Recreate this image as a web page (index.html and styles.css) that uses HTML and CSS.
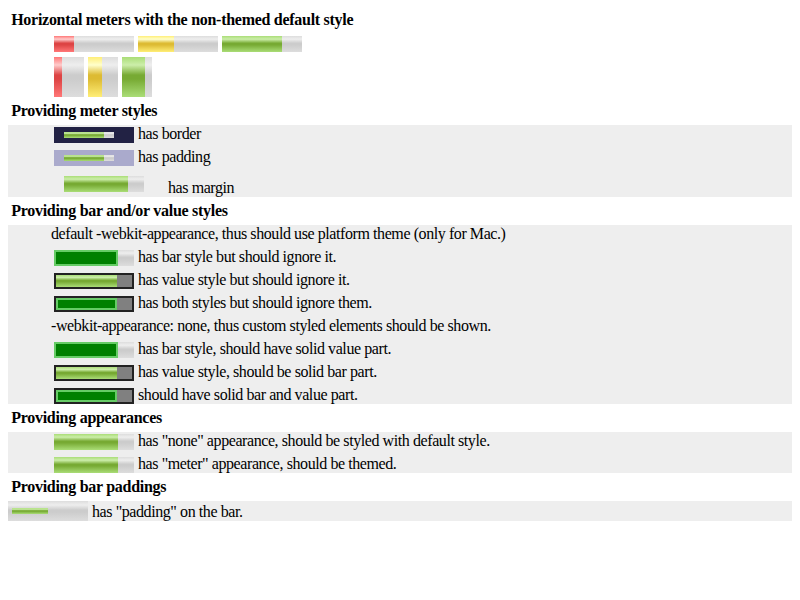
FILE: index.html
```html
<!DOCTYPE html>
<html>
<head>
<meta charset="utf-8">
<link rel="stylesheet" href="styles.css">
</head>
<body>
<h2>Horizontal meters with the non-themed default style</h2>
<div class="plain">
  <div class="row"><span class="meter"><span class="bar"><span class="val bad" style="width:25%"></span></span></span> <span class="meter"><span class="bar"><span class="val sub" style="width:45%"></span></span></span> <span class="meter"><span class="bar"><span class="val good" style="width:75%"></span></span></span></div>
  <div class="row"><span class="meter vert"><span class="bar"><span class="val bad" style="width:25%"></span></span></span> <span class="meter vert"><span class="bar"><span class="val sub" style="width:45%"></span></span></span> <span class="meter vert"><span class="bar"><span class="val good" style="width:75%"></span></span></span></div>
</div>

<h2>Providing meter styles</h2>
<div class="box">
  <div class="row"><span class="meter bordered"><span class="bar"><span class="val good" style="width:80%"></span></span></span> <span class="t">has border</span></div>
  <div class="row"><span class="meter padded"><span class="bar"><span class="val good" style="width:80%"></span></span></span> <span class="t">has padding</span></div>
  <div class="row"><span class="meter margined"><span class="bar"><span class="val good" style="width:80%"></span></span></span> <span class="t">has margin</span></div>
</div>

<h2>Providing bar and/or value styles</h2>
<div class="box">
  <div class="row note"><span class="t">default -webkit-appearance, thus should use platform theme (only for Mac.)</span></div>
  <div class="row"><span class="meter"><span class="bar"><span class="val sval" style="width:80%"></span></span></span> <span class="t">has bar style but should ignore it.</span></div>
  <div class="row"><span class="meter"><span class="bar sbar"><span class="val good" style="width:80%"></span></span></span> <span class="t">has value style but should ignore it.</span></div>
  <div class="row"><span class="meter"><span class="bar sbar"><span class="val sval" style="width:80%"></span></span></span> <span class="t">has both styles but should ignore them.</span></div>
  <div class="row note"><span class="t">-webkit-appearance: none, thus custom styled elements should be shown.</span></div>
  <div class="row"><span class="meter"><span class="bar"><span class="val sval" style="width:80%"></span></span></span> <span class="t">has bar style, should have solid value part.</span></div>
  <div class="row"><span class="meter"><span class="bar sbar"><span class="val good" style="width:80%"></span></span></span> <span class="t">has value style, should be solid bar part.</span></div>
  <div class="row"><span class="meter"><span class="bar sbar"><span class="val sval" style="width:80%"></span></span></span> <span class="t">should have solid bar and value part.</span></div>
</div>

<h2>Providing appearances</h2>
<div class="box">
  <div class="row"><span class="meter"><span class="bar"><span class="val good" style="width:80%"></span></span></span> <span class="t">has "none" appearance, should be styled with default style.</span></div>
  <div class="row"><span class="meter"><span class="bar"><span class="val good" style="width:80%"></span></span></span> <span class="t">has "meter" appearance, should be themed.</span></div>
</div>

<h2>Providing bar paddings</h2>
<div class="box">
  <div class="row flush"><span class="meter tall"><span class="bar padbar"><span class="val good" style="width:50%"></span></span></span> <span class="t">has "padding" on the bar.</span></div>
</div>
</body>
</html>
```

FILE: styles.css
```css
body {
  margin: 8px;
  font-family: "Liberation Serif", "Times New Roman", serif;
  font-size: 16px;
  line-height: 18px;
  color: #000;
  background: #fff;
}

h2 {
  font-size: 16px;
  font-weight: bold;
  line-height: 18px;
  margin: 3.2px;
  letter-spacing: -0.28px;
}

.box {
  background: #eee;
}

.row {
  margin: 5px 0;
  padding-left: 46px;
  white-space: nowrap;
}

.row.note {
  padding-left: 43px;
}

.row.flush {
  padding-left: 0;
}

.t {
  letter-spacing: -0.42px;
}

.meter {
  display: inline-block;
  box-sizing: border-box;
  width: 80px;
  height: 16px;
  vertical-align: -4px;
}

.meter.vert {
  width: 30px;
  height: 40px;
}

.meter.tall {
  height: 20px;
}

.meter.bordered {
  border-style: solid;
  border-color: #224;
  border-width: 5px 20px 5px 10px;
}

.meter.padded {
  background: #aac;
  padding: 5px 20px 5px 10px;
}

.meter.margined {
  margin: 5px 20px 5px 10px;
}

.bar {
  display: block;
  box-sizing: border-box;
  height: 100%;
  background: linear-gradient(#ddd, #eee 20%, #ccc 45%, #ccc 55%, #ddd);
}

.bar.sbar {
  background: gray;
  border: 2px solid #222;
}

.bar.padbar {
  padding: 7px 4px;
}

.val {
  display: block;
  box-sizing: border-box;
  height: 100%;
}

.val.good {
  background: linear-gradient(#ad7, #cea 20%, #7a3 45%, #7a3 55%, #ad7);
}

.val.sub {
  background: linear-gradient(#fe7, #ffc 20%, #db3 45%, #db3 55%, #fe7);
}

.val.bad {
  background: linear-gradient(#f77, #fcc 20%, #d44 45%, #d44 55%, #f77);
}

.val.sval {
  background: green;
  border: 2px solid #6c6;
}
```
